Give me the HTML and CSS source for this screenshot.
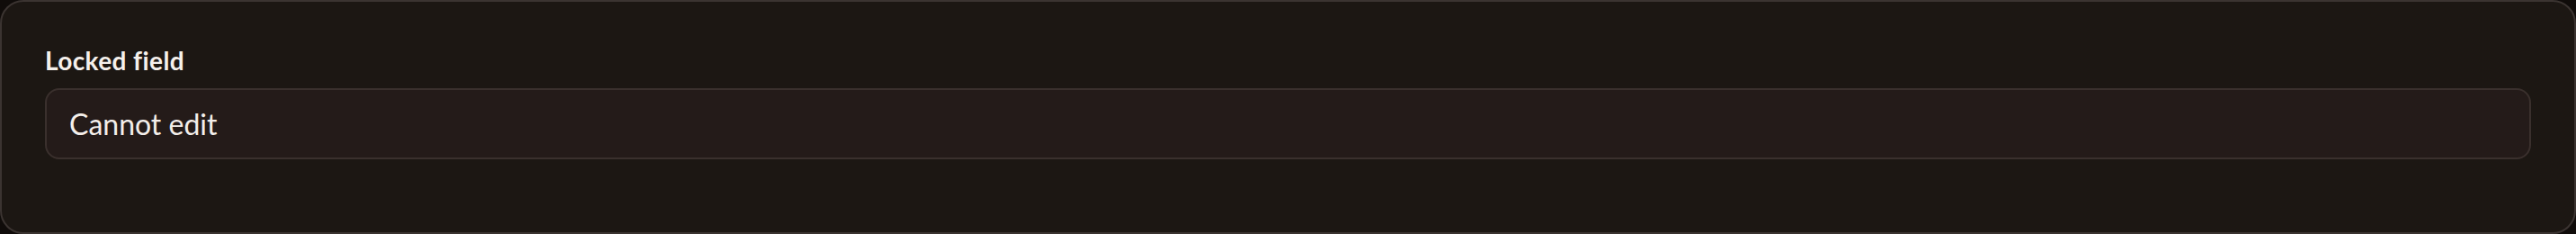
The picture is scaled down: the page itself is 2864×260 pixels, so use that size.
FILE: index.html
```html
<!DOCTYPE html>
<html>
<head>
<meta charset="utf-8">
<link rel="stylesheet" href="styles.css">
</head>
<body>
<div class="card">
  <label class="label">Locked field</label>
  <div class="input">Cannot edit</div>
</div>
</body>
</html>
```
FILE: styles.css
```css
html, body {
  margin: 0;
  padding: 0;
  background: #100c0a;
}
body {
  width: 2864px;
  height: 260px;
  font-family: Lato, "Noto Sans", sans-serif;
}
.card {
  box-sizing: border-box;
  width: 2864px;
  height: 260px;
  background: #1c1713;
  border: 2px solid #3b3431;
  border-radius: 26px;
  padding: 46px 48px 0 48px;
  display: flex;
  flex-direction: column;
  gap: 12px;
}
.label {
  display: block;
  color: #f5f0ec;
  font-size: 28px;
  font-weight: 700;
  line-height: 38px;
  letter-spacing: 0.4px;
}
.input {
  box-sizing: border-box;
  height: 79px;
  background: #241b19;
  border: 2px solid #3a302d;
  border-radius: 16px;
  padding: 0 25px;
  display: flex;
  align-items: center;
  color: #f3eeea;
  font-size: 32px;
  font-weight: 400;
}
```
